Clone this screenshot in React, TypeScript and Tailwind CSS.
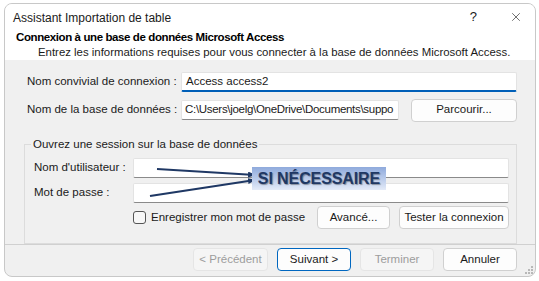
import { X } from 'lucide-react';

const font = { fontFamily: '"Liberation Sans", Arial, sans-serif' };

function TextBox({ value, focused, className }: { value?: string; focused?: boolean; className?: string }) {
  return (
    <div
      className={`h-[20px] bg-white border border-[#e3e3e3] ${
        focused ? 'border-b-2 border-b-[#005fb8]' : 'border-b-[#8a8a8a]'
      } rounded-[2px] px-1 flex items-center text-[11.5px] text-[#1a1a1a] overflow-hidden whitespace-nowrap ${className ?? ''}`}
    >
      {value}
    </div>
  );
}

function Button({
  children,
  className,
  disabled,
  primary,
}: {
  children: React.ReactNode;
  className?: string;
  disabled?: boolean;
  primary?: boolean;
}) {
  return (
    <div
      className={`h-[23px] rounded-[4px] border flex items-center justify-center whitespace-nowrap text-[11.5px] ${
        primary ? 'border-[#0067c0] bg-[#fdfdfd]' : disabled ? 'border-[#e5e5e5] bg-[#f5f5f5]' : 'border-[#d0d0d0] bg-[#fdfdfd]'
      } ${disabled ? 'text-[#9d9d9d]' : 'text-[#1a1a1a]'} ${className ?? ''}`}
    >
      {children}
    </div>
  );
}

export default function App() {
  return (
    <div className="w-[539px] h-[281px] bg-white p-[3px_3px_4px_4px]" style={font}>
      <div className="relative w-[532px] h-[274px] rounded-[8px] border border-[#c8c8c8] overflow-hidden flex flex-col bg-[#f0f0f0] whitespace-nowrap">
        {/* Header */}
        <div className="bg-white h-[56px] flex flex-col">
          <div className="flex items-center h-[28px] pl-[8px] pr-[12px]">
            <span className="text-[12px] text-[#1a1a1a] flex-1 pt-[1px]">Assistant Importation de table</span>
            <span className="text-[13px] text-[#1a1a1a] mr-[32px]">?</span>
            <X className="w-[14px] h-[14px] text-[#333]" strokeWidth={1.2} />
          </div>
          <div className="pl-[11px] text-[11.5px] font-bold text-black leading-[14px] tracking-[-0.4px]">
            Connexion à une base de données Microsoft Access
          </div>
          <div className="pl-[33px] text-[11.4px] text-[#1a1a1a] leading-[16px]">
            Entrez les informations requises pour vous connecter à la base de données Microsoft Access.
          </div>
        </div>

        {/* Body */}
        <div className="flex-1 flex flex-col pl-[19px] pr-[18px] pt-[12px] text-[11.5px] text-[#1a1a1a]">
          <div className="flex items-center h-[20px]">
            <span className="w-[157px] pl-[3px]">Nom convivial de connexion :</span>
            <TextBox value="Access access2" focused className="flex-1" />
          </div>
          <div className="flex items-center h-[22px] mt-[7px]">
            <span className="w-[157px] pl-[3px]">Nom de la base de données :</span>
            <TextBox value="C:\Users\joelg\OneDrive\Documents\suppo" className="w-[218px] tracking-[-0.3px] pl-[3px]" />
            <Button className="w-[106px] ml-auto">Parcourir...</Button>
          </div>

          {/* Group box */}
          <div className="relative mt-[23px] border border-[#dcdcdc] h-[100px] pl-[9px] pr-[7px] pt-[13px]">
            <span className="absolute -top-[9px] left-[6px] bg-[#f0f0f0] px-[2px] leading-[16px]">
              Ouvrez une session sur la base de données
            </span>
            <div className="flex items-center h-[20px]">
              <span className="w-[99px]">Nom d'utilisateur :</span>
              <TextBox className="flex-1" />
            </div>
            <div className="flex items-center h-[20px] mt-[5px]">
              <span className="w-[99px]">Mot de passe :</span>
              <TextBox className="flex-1" />
            </div>
            <div className="flex items-center h-[23px] mt-[3px]">
              <div className="w-[99px]" />
              <div className="w-[13px] h-[13px] border border-[#555] rounded-[3px] bg-[#f7f7f7]" />
              <span className="ml-[5px]">Enregistrer mon mot de passe</span>
              <Button className="w-[73px] ml-auto">Avancé...</Button>
              <Button className="w-[110px] ml-[9px]">Tester la connexion</Button>
            </div>
          </div>
        </div>

        {/* Footer */}
        <div className="h-[43px] border-t border-[#d0d0d0] flex items-center justify-end pr-[18px] gap-[9px] pb-[2px]">
          <Button disabled className="w-[75px]">&lt; Précédent</Button>
          <Button primary className="w-[74px]">Suivant &gt;</Button>
          <Button disabled className="w-[74px]">Terminer</Button>
          <Button className="w-[74px]">Annuler</Button>
        </div>
        <svg className="absolute right-[1px] bottom-[1px]" width="10" height="10" viewBox="0 0 10 10">
          {[
            [7, 1],
            [4, 4],
            [7, 4],
            [1, 7],
            [4, 7],
            [7, 7],
          ].map(([x, y]) => (
            <rect key={`${x}-${y}`} x={x} y={y} width="2" height="2" fill="#b8b8b8" />
          ))}
        </svg>

        {/* Annotation */}
        <svg className="absolute left-0 top-0 pointer-events-none" width="532" height="274" viewBox="0 0 532 274">
          <defs>
            <marker id="ah" markerWidth="8" markerHeight="6" refX="1" refY="3" orient="auto" markerUnits="userSpaceOnUse">
              <path d="M8,0 L0,3 L8,6 Z" fill="#1f3864" />
            </marker>
          </defs>
          <line x1="250" y1="171" x2="152" y2="165" stroke="#1f3864" strokeWidth="2.2" markerStart="url(#ah)" />
          <line x1="250" y1="176" x2="145" y2="192" stroke="#1f3864" strokeWidth="2.2" markerStart="url(#ah)" />
        </svg>
        <div className="absolute left-[247px] top-[163px] w-[134px] h-[23px] bg-gradient-to-b from-[#8faadc] to-[#e4ebf8] flex items-center justify-center">
          <span
            className="text-[16px] font-bold text-[#1f3864] tracking-[-0.1px]"
            style={{ textShadow: '1px 1px 1px rgba(0,0,0,0.35)' }}
          >
            SI NÉCESSAIRE
          </span>
        </div>
      </div>
    </div>
  );
}
